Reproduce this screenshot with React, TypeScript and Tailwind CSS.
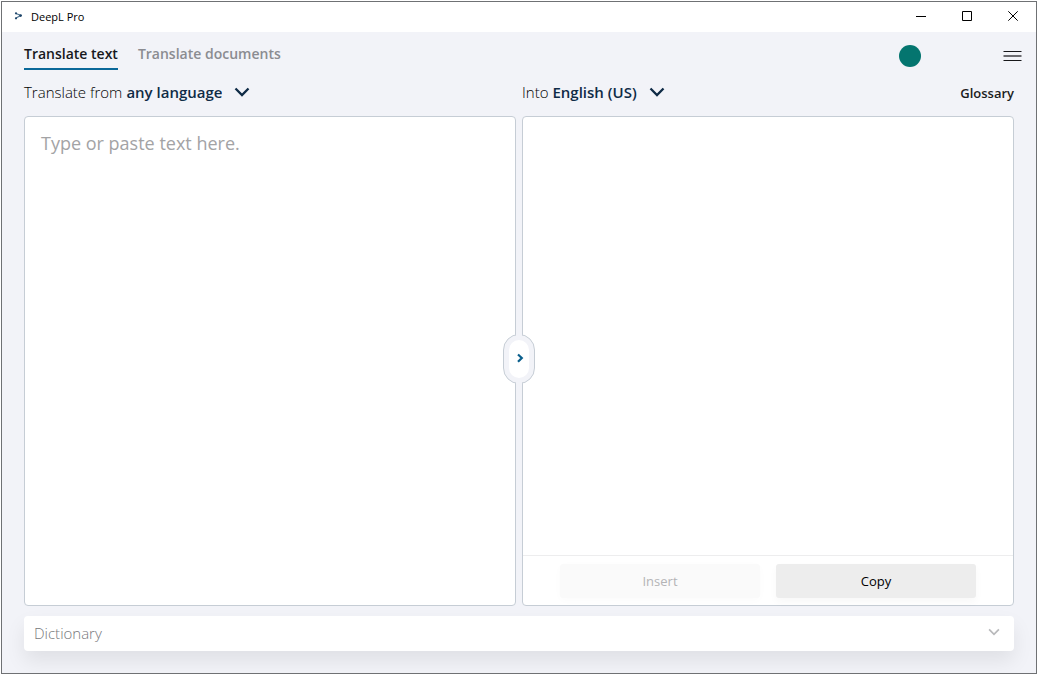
import type { ReactNode } from 'react';

function Chevron({ className }: { className: string }) {
  return (
    <svg viewBox="0 0 16 10" className={className} fill="none" stroke="currentColor" strokeWidth="2.3" aria-hidden="true">
      <path d="M1.5 1.5 L8 8 L14.5 1.5" />
    </svg>
  );
}

function TitleBar() {
  return (
    <header className="flex h-[30px] shrink-0 items-center bg-white pl-3">
      <svg viewBox="0 0 8 8" className="mb-0.5 h-2 w-2" aria-hidden="true">
        <path d="M2 1.5 L6.8 3.5 L2 6" fill="none" stroke="#4f7593" strokeWidth="1.3" />
        <circle cx="2" cy="1.3" r="1.1" fill="#1d4468" />
        <circle cx="6.6" cy="3.6" r="1.3" fill="#1d4468" />
        <circle cx="2" cy="6.3" r="1.1" fill="#1d4468" />
      </svg>
      <h1 className="ml-[9px] text-[11px] text-black">DeepL Pro</h1>
      <div className="ml-auto flex h-full">
        <WindowButton label="Minimize">
          <path d="M0 5.5 H10" />
        </WindowButton>
        <WindowButton label="Maximize">
          <path d="M0.5 0.5 H9.5 V9.5 H0.5 Z" />
        </WindowButton>
        <WindowButton label="Close">
          <path d="M0.3 0.3 L9.7 9.7 M9.7 0.3 L0.3 9.7" />
        </WindowButton>
      </div>
    </header>
  );
}

function WindowButton({ label, children }: { label: string; children: ReactNode }) {
  return (
    <button type="button" aria-label={label} className="flex w-[46px] items-center justify-center pb-0.5">
      <svg viewBox="0 0 10 10" className="h-2.5 w-2.5" fill="none" stroke="#000" strokeWidth="1" aria-hidden="true">
        {children}
      </svg>
    </button>
  );
}

function Navigation() {
  return (
    <div className="flex h-[38px] shrink-0 items-stretch pr-3.5 pl-[22px]">
      <nav className="flex gap-5 text-sm font-semibold">
        <a href="#text" aria-current="page" className="flex items-center border-b-2 border-[#0a6899] pt-2 text-[#17181c]">
          Translate text
        </a>
        <a href="#documents" className="flex items-center border-b-2 border-transparent pt-2 text-[#8b8c91]">
          Translate documents
        </a>
      </nav>
      <div className="ml-auto flex items-center gap-[82px] pt-2.5">
        <button type="button" aria-label="Account" className="h-[22px] w-[22px] rounded-full bg-[#04756f]" />
        <button type="button" aria-label="Menu">
          <svg viewBox="0 0 19 11" className="h-[11px] w-[19px]" fill="none" aria-hidden="true">
            <path d="M0.5 0.5 H18.5 M0.5 9.5 H18.5" stroke="#17171a" strokeWidth="1.2" />
            <path d="M0.5 5 H18.5" stroke="#6b6b70" strokeWidth="2" />
          </svg>
        </button>
      </div>
    </div>
  );
}

function LanguagePicker({ id, label, value, options }: { id: string; label: string; value: string; options: string[] }) {
  return (
    <div className="flex items-center pb-0.5 text-[15px] leading-5">
      <label htmlFor={id} className="font-light whitespace-pre text-black">
        {label}
      </label>
      <div className="grid items-center">
        <select
          id={id}
          defaultValue={value}
          className="col-start-1 row-start-1 appearance-none bg-transparent pr-7 pl-1 font-semibold text-[#0f2b46] [field-sizing:content]"
        >
          {options.map((option) => (
            <option key={option}>{option}</option>
          ))}
        </select>
        <Chevron className="pointer-events-none col-start-1 row-start-1 h-2.5 w-4 justify-self-end text-[#0f2b46]" />
      </div>
    </div>
  );
}

function SwapHandle() {
  return (
    <div className="pointer-events-none absolute inset-0 flex items-center justify-center pb-1">
      <button type="button" aria-label="Toggle panels" className="pointer-events-auto">
        <svg viewBox="0 0 32 50" className="h-[50px] w-8" fill="none" aria-hidden="true">
          <rect x="0.5" y="0.5" width="31" height="49" rx="15.5" fill="#f2f3f8" stroke="#c6cdd5" />
          <path d="M13 0 H19 V3 H13 Z M13 47 H19 V50 H13 Z" fill="#f2f3f8" />
          <rect x="6" y="6" width="20" height="38" rx="10" fill="#fff" />
          <path d="M15 20.5 L18.8 24 L15 27.8" stroke="#0a5f8c" strokeWidth="2.2" />
        </svg>
      </button>
    </div>
  );
}

export default function App() {
  return (
    <div className="flex h-screen flex-col bg-white px-px pt-px pb-0.5 font-['Open_Sans','Noto_Sans',sans-serif]">
      <div className="flex min-h-0 flex-1 flex-col overflow-hidden border border-[#6f7174] bg-[#f2f3f8]">
        <TitleBar />
        <Navigation />
        <main className="flex min-h-0 flex-1 flex-col px-[22px] pb-[22px]">
          <div className="grid h-[46px] shrink-0 grid-cols-2 items-center gap-1.5">
            <LanguagePicker id="source" label="Translate from" value="any language" options={['any language', 'English', 'German']} />
            <div className="flex items-center justify-between">
              <LanguagePicker id="target" label="Into" value="English (US)" options={['English (US)', 'English (UK)', 'German']} />
              <button type="button" className="pt-0.5 text-[13px] font-semibold text-[#1b1c20]">
                Glossary
              </button>
            </div>
          </div>
          <div className="relative grid min-h-0 flex-1 grid-cols-2 gap-1.5">
            <textarea
              aria-label="Source text"
              placeholder="Type or paste text here."
              className="resize-none rounded-[4px] border border-[#c6cdd5] bg-white px-4 py-3 text-lg leading-7 outline-none placeholder:text-[#a3a3a5]"
            />
            <section className="flex flex-col rounded-[4px] border border-[#c6cdd5] bg-white">
              <output aria-label="Translation" className="flex-1" />
              <div className="flex justify-center gap-4 border-t border-[#ededee] pt-2 pb-[7px] text-[13px]">
                <button type="button" disabled className="h-[34px] w-[200px] rounded-[3px] bg-[#fafafa] pt-0.5 text-[#b4b4b6] shadow-[0_2px_8px_rgba(0,0,0,0.02)]">
                  Insert
                </button>
                <button type="button" className="h-[34px] w-[200px] rounded-[3px] bg-[#ededed] pt-0.5 text-black shadow-[0_4px_8px_rgba(0,0,0,0.03)]">
                  Copy
                </button>
              </div>
            </section>
            <SwapHandle />
          </div>
          <button
            type="button"
            className="mt-2.5 flex h-[35px] shrink-0 items-center justify-between rounded-[4px] bg-white pr-3.5 pl-2.5 text-[15px] font-light text-[#77787c] shadow-[0_10px_20px_rgba(0,0,0,0.08)]"
          >
            Dictionary
            <Chevron className="mb-1 h-2 w-3 text-[#b8b9bb]" />
          </button>
        </main>
      </div>
    </div>
  );
}
